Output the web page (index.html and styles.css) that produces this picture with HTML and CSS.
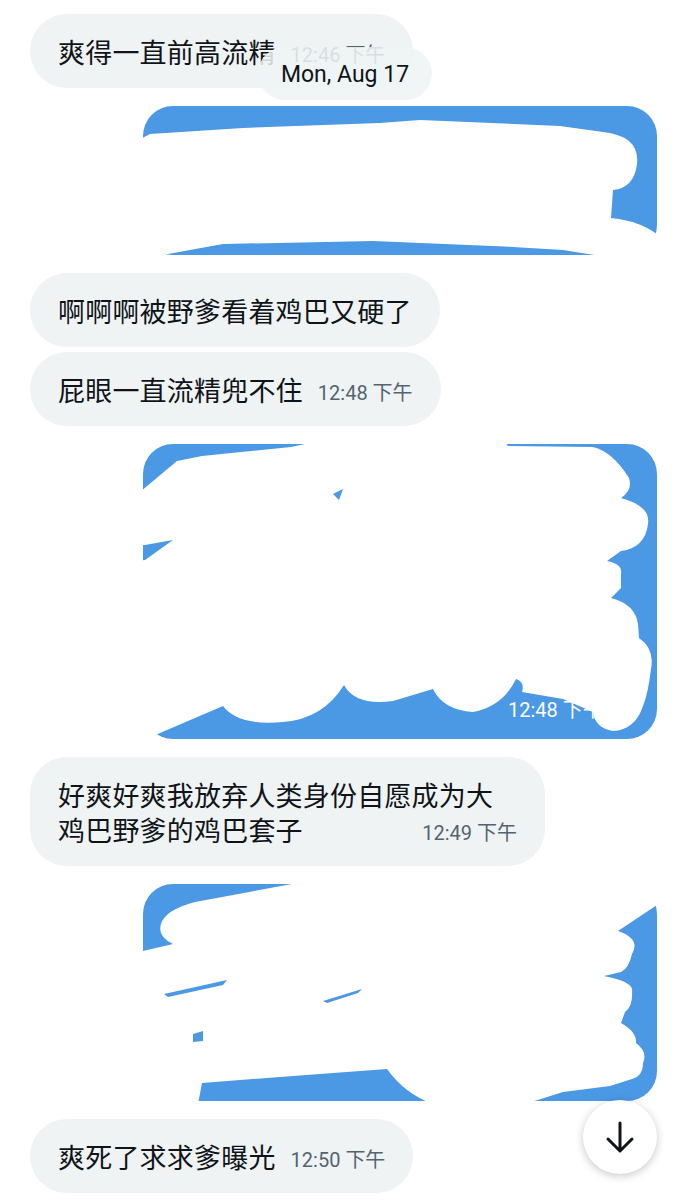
FILE: index.html
```html
<!DOCTYPE html>
<html lang="zh-CN">
<head>
<meta charset="utf-8">
<title>Chat</title>
<link rel="stylesheet" href="styles.css">
</head>
<body>
<div class="chat">
  <div class="bubble first">
    <span class="text">爽得一直前高流精</span><span class="time">12:46 下午</span>
  </div>
  <div class="date-pill">Mon, Aug 17</div>

  <div class="media media-1">
    <svg class="scribble" width="514" height="149" viewBox="0 0 514 149">
      <path d="M -12 38 L 7 28 L 100 22 L 237 17 L 277 14 L 417 20 L 460 26 Q 497 30 494 58 Q 491 82 470 84 L 468 112 Q 500 115 520 133 L 520 152 L 470 152 L 420 144 L 370 141 L 230 135 L 80 138 L 25 148 L -12 146 Z" fill="#fff"/>
    </svg>
  </div>

  <div class="bubble">
    <span class="text">啊啊啊被野爹看着鸡巴又硬了</span>
  </div>
  <div class="bubble grouped">
    <span class="text">屁眼一直流精兜不住</span><span class="time">12:48 下午</span>
  </div>

  <div class="media media-2">
    <span class="media-time">12:48 下午</span>
    <svg class="scribble" width="514" height="295" viewBox="0 0 514 295">
      <path d="M -15 58 L 34 17 L 59 12 L 148 3 L 176 -3 L 361 -3 L 365 2 L 450 3 Q 470 8 486 34 Q 490 46 478 54 Q 508 62 505 80 Q 502 104 478 107 L 464 117 Q 480 120 478 130 L 478 144 L 468 154 Q 492 160 495 180 L 496 194 Q 512 205 508 225 Q 505 250 500 262 Q 492 286 470 287 Q 452 284 450 268 L 420 255 L 379 248 Q 382 238 373 235 Q 360 262 330 268 Q 300 266 290 245 L 250 257 Q 212 262 201 241 Q 180 275 140 278 Q 95 282 80 262 L 10 292 L -15 292 L -15 118 L 2 116 L 30 96 L 2 101 L -15 101 Z" fill="#fff"/>
      <path d="M 190 50 L 200 45 L 196 56 Z" fill="#4b98e5"/>
    </svg>
  </div>

  <div class="bubble multi">
    <span class="text">好爽好爽我放弃人类身份自愿成为大鸡巴野爹的鸡巴套子</span><span class="time">12:49 下午</span>
  </div>

  <div class="media media-3">
    <svg class="scribble" width="514" height="217" viewBox="0 0 514 217">
      <path d="M 165 -3 L 520 -3 L 520 17 L 475 47 Q 498 55 489 70 Q 486 84 478 88 L 461 92 Q 492 98 489 108 Q 490 122 482 128 L 478 139 Q 494 148 493 159 Q 505 168 500 179 Q 500 192 489 195 L 467 202 L 420 208 L 382 220 L 290 220 Q 262 210 244 185 L 150 192 L 59 199 L 55 220 L -15 220 L -15 65 L 0 67 L 30 60 Q 14 52 18 40 Q 22 26 52 18 Z" fill="#fff"/>
      <path d="M 21 110 L 84 96 L 80 101 L 25 113 Z" fill="#4b98e5"/>
      <path d="M 180 117 L 219 105 L 215 109 L 184 119 Z" fill="#4b98e5"/>
      <path d="M 50 150 L 60 147 L 60 157 L 50 158 Z" fill="#4b98e5"/>
    </svg>
  </div>

  <div class="bubble">
    <span class="text">爽死了求求爹曝光</span><span class="time">12:50 下午</span>
  </div>

  <button class="scroll-down" type="button" aria-label="Scroll to bottom">
    <svg width="34" height="34" viewBox="0 0 34 34">
      <path d="M 17 3 L 17 31 M 5 19 L 17 31 L 29 19" fill="none" stroke="#0f1419" stroke-width="3" stroke-linecap="round" stroke-linejoin="round"/>
    </svg>
  </button>
</div>
</body>
</html>
```

FILE: styles.css
```css
html, body {
  margin: 0;
  padding: 0;
  background: #ffffff;
}

body {
  font-family: "Noto Sans CJK SC", "Noto Sans", sans-serif;
  color: #0f1419;
}

.chat {
  position: relative;
  width: 688px;
  height: 1200px;
  overflow: hidden;
  box-sizing: border-box;
  padding-top: 14px;
  display: flex;
  flex-direction: column;
}

.bubble {
  align-self: flex-start;
  margin-left: 30px;
  margin-top: 18px;
  max-width: 515px;
  box-sizing: border-box;
  background: #eff3f4;
  border-radius: 37px;
  padding: 20px 28px 19px;
  font-size: 27px;
  line-height: 35px;
}

.bubble.first {
  margin-top: 0;
}

.bubble.grouped {
  margin-top: 5px;
}

.bubble .text {
  letter-spacing: 0.2px;
}

.time {
  float: right;
  position: relative;
  top: 4px;
  margin-left: 15px;
  font-family: "Roboto", "Noto Sans CJK SC", sans-serif;
  font-size: 20px;
  line-height: 35px;
  color: #536471;
}

.date-pill {
  position: absolute;
  left: 258px;
  top: 47px;
  width: 174px;
  height: 53px;
  border-radius: 27px;
  background: rgba(239, 243, 244, 0.86);
  display: flex;
  align-items: center;
  justify-content: center;
  padding-top: 2px;
  box-sizing: border-box;
  font-family: "Roboto", "Noto Sans", sans-serif;
  font-size: 23px;
  color: #0f1419;
}

.media {
  position: relative;
  align-self: flex-end;
  margin-right: 31px;
  margin-top: 18px;
  width: 514px;
  background: #4b98e5;
  border-radius: 30px;
}

.media-1 { height: 149px; }
.media-2 { height: 295px; }
.media-3 { height: 217px; }

.scribble {
  position: absolute;
  left: 0;
  top: 0;
  overflow: visible;
}

.media-time {
  position: absolute;
  left: 365px;
  top: 250px;
  font-family: "Roboto", "Noto Sans CJK SC", sans-serif;
  font-size: 20px;
  color: #ffffff;
}

.scroll-down {
  position: absolute;
  left: 583px;
  top: 1100px;
  width: 74px;
  height: 74px;
  padding: 0;
  border: none;
  border-radius: 50%;
  background: #ffffff;
  box-shadow: 0 2px 8px rgba(0, 0, 0, 0.22);
  display: flex;
  align-items: center;
  justify-content: center;
}
```
